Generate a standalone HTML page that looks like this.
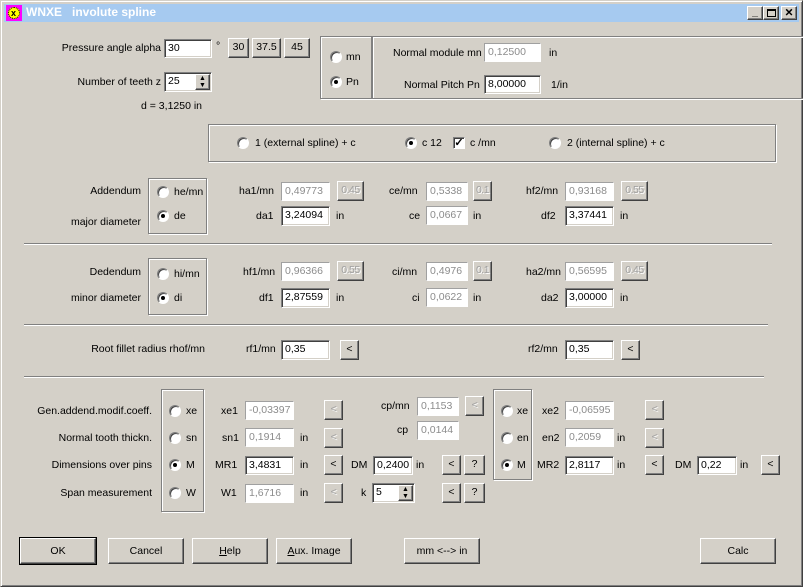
<!DOCTYPE html><html><head><meta charset="utf-8"><style>
body{margin:0;width:803px;height:587px;background:#d4d0c8;font-family:"Liberation Sans",sans-serif;font-size:10.5px;color:#000;position:relative;overflow:hidden}
div,span{position:absolute;box-sizing:border-box}
.t{white-space:nowrap;line-height:14px}
.i{background:#fff;border-top:1px solid #808080;border-left:1px solid #808080;border-right:1px solid #fff;border-bottom:1px solid #fff;box-shadow:inset 1px 1px 0 #404040,inset -1px -1px 0 #d4d0c8;padding:2px 0 0 3px;line-height:13px;white-space:nowrap;overflow:hidden}
.d{background:#fff;border:1px solid #a0a0a0;border-right-color:#fff;border-bottom-color:#fff;color:#8c8c8c;padding:2px 0 0 3px;line-height:13px;white-space:nowrap;overflow:hidden}
.b{background:#d4d0c8;border-top:1px solid #fff;border-left:1px solid #fff;border-right:1px solid #404040;border-bottom:1px solid #404040;box-shadow:inset -1px -1px 0 #808080;text-align:center;line-height:16px;white-space:nowrap}
.g{color:#a0a0a0;text-shadow:1px 1px 0 #fff;letter-spacing:-0.5px}
.rd{width:12px;height:12px;border-radius:50%;background:#fff;border:1px solid #808080;border-right-color:#fff;border-bottom-color:#fff;box-shadow:inset 1px 1px 0 #404040}
.rd.on::after{content:"";position:absolute;left:3px;top:3px;width:4px;height:4px;border-radius:50%;background:#000}
.box{border:1px solid #808080;box-shadow:inset 1px 1px 0 #fff,1px 1px 0 #fff}
.sep{height:2px;border-top:1px solid #808080;border-bottom:1px solid #fff}
</style></head><body>
<div style="left:0;top:0;width:803px;height:587px;border:1px solid #d4d0c8;border-right-color:#404040;border-bottom-color:#404040;box-shadow:inset 1px 1px 0 #fff,inset -1px -1px 0 #808080"></div>
<div style="left:4px;top:4px;width:795px;height:18px;background:#a6caf0"></div>
<div style="left:6px;top:5px;width:16px;height:16px;background:#f0f"><div style="left:2px;top:2px;width:12px;height:12px;border-radius:50%;background:#ff0;border:1px dotted #000"></div><div class="t" style="left:5px;top:1px;font-size:9px;font-weight:bold">x</div></div>
<div class="t" style="left:26px;top:5px;color:#fff;font-weight:bold;font-size:12px">WNXE&nbsp;&nbsp; involute spline</div>
<div class="b" style="left:747px;top:6px;width:16px;height:14px;line-height:10px;font-weight:bold">_</div>
<div class="b" style="left:763px;top:6px;width:16px;height:14px"><div style="left:3px;top:2px;width:9px;height:8px;border:1px solid #000;border-top-width:2px"></div></div>
<div class="b" style="left:781px;top:6px;width:16px;height:14px;line-height:12px;font-weight:bold">✕</div>

<div class="t" style="right:642px;top:41px">Pressure angle alpha</div>
<div class="i" style="left:164px;top:39px;width:48px;height:19px">30</div>
<div class="t" style="left:216px;top:39px">°</div>
<div class="b" style="left:228px;top:38px;width:21px;height:20px">30</div>
<div class="b" style="left:252px;top:38px;width:29px;height:20px">37.5</div>
<div class="b" style="left:284px;top:38px;width:26px;height:20px">45</div>
<div class="t" style="right:642px;top:75px">Number of teeth z</div>
<div class="i" style="left:164px;top:72px;width:48px;height:20px">25</div>
<div class="b" style="left:195px;top:74px;width:15px;height:16px;font-size:7px;line-height:7px">▲<br>▼</div>
<div class="t" style="left:141px;top:99px">d = 3,1250 in</div>

<div class="box" style="left:320px;top:36px;width:52px;height:63px"></div>
<div class="rd" style="left:330px;top:51px"></div><div class="t" style="left:346px;top:50px">mn</div>
<div class="rd on" style="left:330px;top:76px"></div><div class="t" style="left:346px;top:75px">Pn</div>
<div class="box" style="left:372px;top:36px;width:440px;height:63px"></div>
<div class="t" style="left:393px;top:46px">Normal module mn</div>
<div class="d" style="left:484px;top:43px;width:57px;height:19px">0,12500</div>
<div class="t" style="left:549px;top:46px">in</div>
<div class="t" style="left:404px;top:78px">Normal Pitch Pn</div>
<div class="i" style="left:484px;top:75px;width:57px;height:19px">8,00000</div>
<div class="t" style="left:551px;top:78px">1/in</div>

<div class="box" style="left:208px;top:124px;width:568px;height:38px"></div>
<div class="rd" style="left:237px;top:137px"></div><div class="t" style="left:255px;top:136px">1 (external spline) + c</div>
<div class="rd on" style="left:405px;top:137px"></div><div class="t" style="left:422px;top:136px">c 12</div>
<div class="rd" style="left:453px;top:137px;border-radius:0;font-size:11px;line-height:10px;text-align:center;font-weight:bold">✓</div><div class="t" style="left:470px;top:136px">c /mn</div>
<div class="rd" style="left:549px;top:137px"></div><div class="t" style="left:567px;top:136px">2 (internal spline) + c</div>

<div class="t" style="right:662px;top:184px">Addendum</div>
<div class="t" style="right:662px;top:215px">major diameter</div>
<div class="box" style="left:148px;top:178px;width:59px;height:56px"></div>
<div class="rd" style="left:157px;top:186px"></div><div class="t" style="left:174px;top:185px">he/mn</div>
<div class="rd on" style="left:157px;top:210px"></div><div class="t" style="left:174px;top:209px">de</div>
<div class="t" style="left:239px;top:184px">ha1/mn</div><div class="d" style="left:281px;top:182px;width:49px;height:19px">0,49773</div><div class="b g" style="left:337px;top:181px;width:27px;height:20px">0.45</div>
<div class="t" style="left:389px;top:184px">ce/mn</div><div class="d" style="left:426px;top:182px;width:42px;height:19px">0,5338</div><div class="b g" style="left:473px;top:181px;width:19px;height:20px">0.1</div>
<div class="t" style="left:526px;top:184px">hf2/mn</div><div class="d" style="left:565px;top:182px;width:49px;height:19px">0,93168</div><div class="b g" style="left:621px;top:181px;width:27px;height:20px">0.55</div>
<div class="t" style="left:256px;top:209px">da1</div><div class="i" style="left:281px;top:206px;width:49px;height:20px">3,24094</div><div class="t" style="left:336px;top:209px">in</div>
<div class="t" style="left:409px;top:209px">ce</div><div class="d" style="left:426px;top:206px;width:42px;height:19px">0,0667</div><div class="t" style="left:473px;top:209px">in</div>
<div class="t" style="left:541px;top:209px">df2</div><div class="i" style="left:565px;top:206px;width:49px;height:20px">3,37441</div><div class="t" style="left:620px;top:209px">in</div>
<div class="sep" style="left:24px;top:243px;width:748px"></div>

<div class="t" style="right:662px;top:265px">Dedendum</div>
<div class="t" style="right:662px;top:291px">minor diameter</div>
<div class="box" style="left:148px;top:258px;width:59px;height:57px"></div>
<div class="rd" style="left:157px;top:268px"></div><div class="t" style="left:174px;top:267px">hi/mn</div>
<div class="rd on" style="left:157px;top:292px"></div><div class="t" style="left:174px;top:291px">di</div>
<div class="t" style="left:243px;top:265px">hf1/mn</div><div class="d" style="left:281px;top:262px;width:49px;height:19px">0,96366</div><div class="b g" style="left:337px;top:261px;width:27px;height:20px">0.55</div>
<div class="t" style="left:392px;top:265px">ci/mn</div><div class="d" style="left:426px;top:262px;width:42px;height:19px">0,4976</div><div class="b g" style="left:473px;top:261px;width:19px;height:20px">0.1</div>
<div class="t" style="left:526px;top:265px">ha2/mn</div><div class="d" style="left:565px;top:262px;width:49px;height:19px">0,56595</div><div class="b g" style="left:621px;top:261px;width:27px;height:20px">0.45</div>
<div class="t" style="left:259px;top:291px">df1</div><div class="i" style="left:281px;top:288px;width:49px;height:20px">2,87559</div><div class="t" style="left:336px;top:291px">in</div>
<div class="t" style="left:412px;top:291px">ci</div><div class="d" style="left:426px;top:288px;width:42px;height:19px">0,0622</div><div class="t" style="left:473px;top:291px">in</div>
<div class="t" style="left:541px;top:291px">da2</div><div class="i" style="left:565px;top:288px;width:49px;height:20px">3,00000</div><div class="t" style="left:620px;top:291px">in</div>
<div class="sep" style="left:24px;top:324px;width:744px"></div>

<div class="t" style="right:598px;top:342px">Root fillet radius rhof/mn</div>
<div class="t" style="left:246px;top:342px">rf1/mn</div><div class="i" style="left:281px;top:340px;width:49px;height:20px">0,35</div><div class="b" style="left:340px;top:340px;width:19px;height:20px">&lt;</div>
<div class="t" style="left:528px;top:342px">rf2/mn</div><div class="i" style="left:565px;top:340px;width:49px;height:20px">0,35</div><div class="b" style="left:621px;top:340px;width:19px;height:20px">&lt;</div>
<div class="sep" style="left:24px;top:376px;width:740px"></div>

<div class="t" style="right:651px;top:404px">Gen.addend.modif.coeff.</div>
<div class="t" style="right:651px;top:431px">Normal tooth thickn.</div>
<div class="t" style="right:651px;top:458px">Dimensions over pins</div>
<div class="t" style="right:651px;top:486px">Span measurement</div>
<div class="box" style="left:161px;top:389px;width:43px;height:123px"></div>
<div class="rd" style="left:169px;top:405px"></div><div class="t" style="left:186px;top:404px">xe</div>
<div class="rd" style="left:169px;top:432px"></div><div class="t" style="left:186px;top:431px">sn</div>
<div class="rd on" style="left:169px;top:459px"></div><div class="t" style="left:186px;top:458px">M</div>
<div class="rd" style="left:169px;top:487px"></div><div class="t" style="left:186px;top:486px">W</div>
<div class="t" style="left:221px;top:404px">xe1</div><div class="d" style="left:245px;top:401px;width:49px;height:19px">-0,03397</div><div class="b g" style="left:324px;top:400px;width:19px;height:20px">&lt;</div>
<div class="t" style="left:222px;top:431px">sn1</div><div class="d" style="left:245px;top:428px;width:49px;height:19px">0,1914</div><div class="t" style="left:300px;top:431px">in</div><div class="b g" style="left:324px;top:428px;width:19px;height:20px">&lt;</div>
<div class="t" style="left:215px;top:458px">MR1</div><div class="i" style="left:245px;top:456px;width:49px;height:19px">3,4831</div><div class="t" style="left:300px;top:458px">in</div><div class="b" style="left:324px;top:455px;width:19px;height:20px">&lt;</div>
<div class="t" style="left:221px;top:486px">W1</div><div class="d" style="left:245px;top:484px;width:49px;height:19px">1,6716</div><div class="t" style="left:300px;top:486px">in</div><div class="b g" style="left:324px;top:483px;width:19px;height:20px">&lt;</div>
<div class="t" style="left:381px;top:399px">cp/mn</div><div class="d" style="left:417px;top:397px;width:42px;height:19px">0,1153</div><div class="b g" style="left:465px;top:396px;width:19px;height:20px">&lt;</div>
<div class="t" style="left:397px;top:423px">cp</div><div class="d" style="left:417px;top:421px;width:42px;height:19px">0,0144</div>
<div class="t" style="left:351px;top:458px">DM</div><div class="i" style="left:373px;top:456px;width:40px;height:19px">0,2400</div><div class="t" style="left:416px;top:458px">in</div>
<div class="b" style="left:442px;top:455px;width:19px;height:20px">&lt;</div><div class="b" style="left:464px;top:455px;width:21px;height:20px">?</div>
<div class="t" style="left:361px;top:486px">k</div><div class="i" style="left:372px;top:483px;width:43px;height:20px">5</div><div class="b" style="left:398px;top:485px;width:15px;height:16px;font-size:7px;line-height:7px">▲<br>▼</div>
<div class="b" style="left:442px;top:483px;width:19px;height:20px">&lt;</div><div class="b" style="left:464px;top:483px;width:21px;height:20px">?</div>
<div class="box" style="left:493px;top:389px;width:39px;height:91px"></div>
<div class="rd" style="left:501px;top:405px"></div><div class="t" style="left:517px;top:404px">xe</div>
<div class="rd" style="left:501px;top:432px"></div><div class="t" style="left:517px;top:431px">en</div>
<div class="rd on" style="left:501px;top:459px"></div><div class="t" style="left:517px;top:458px">M</div>
<div class="t" style="left:542px;top:404px">xe2</div><div class="d" style="left:565px;top:401px;width:49px;height:19px">-0,06595</div><div class="b g" style="left:645px;top:400px;width:19px;height:20px">&lt;</div>
<div class="t" style="left:542px;top:431px">en2</div><div class="d" style="left:565px;top:428px;width:49px;height:19px">0,2059</div><div class="t" style="left:617px;top:431px">in</div><div class="b g" style="left:645px;top:428px;width:19px;height:20px">&lt;</div>
<div class="t" style="left:537px;top:458px">MR2</div><div class="i" style="left:565px;top:456px;width:49px;height:19px">2,8117</div><div class="t" style="left:617px;top:458px">in</div><div class="b" style="left:645px;top:455px;width:19px;height:20px">&lt;</div>
<div class="t" style="left:675px;top:458px">DM</div><div class="i" style="left:697px;top:456px;width:40px;height:19px">0,22</div><div class="t" style="left:740px;top:458px">in</div><div class="b" style="left:761px;top:455px;width:19px;height:20px">&lt;</div>

<div class="b" style="left:20px;top:538px;width:76px;height:26px;line-height:24px;outline:1px solid #000">OK</div>
<div class="b" style="left:108px;top:538px;width:76px;height:26px;line-height:24px">Cancel</div>
<div class="b" style="left:192px;top:538px;width:76px;height:26px;line-height:24px"><u>H</u>elp</div>
<div class="b" style="left:276px;top:538px;width:76px;height:26px;line-height:24px"><u>A</u>ux. Image</div>
<div class="b" style="left:404px;top:538px;width:76px;height:26px;line-height:24px">mm &lt;--&gt; in</div>
<div class="b" style="left:700px;top:538px;width:76px;height:26px;line-height:24px">Calc</div>
</body></html>
